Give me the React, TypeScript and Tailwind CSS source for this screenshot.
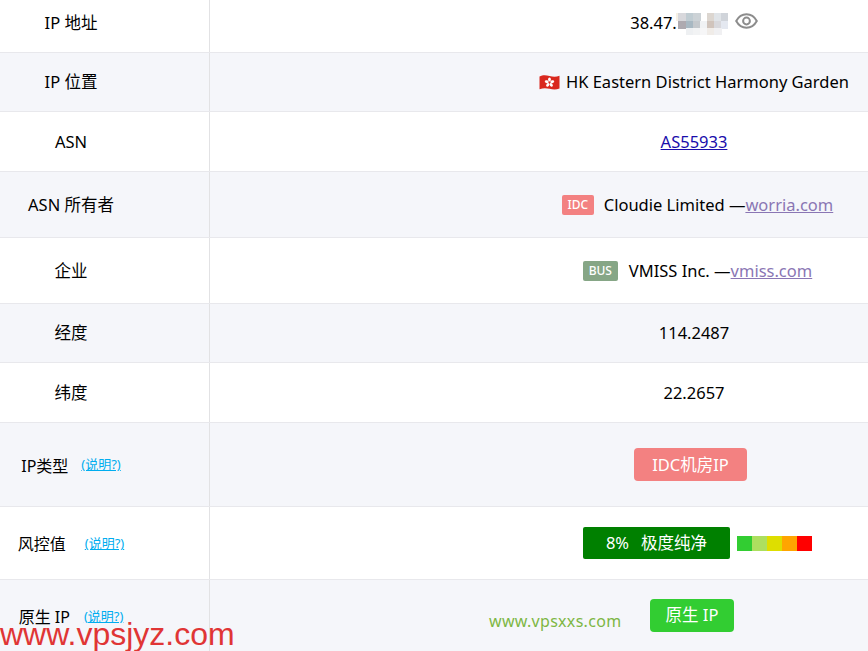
const font = "font-['Noto_Sans','Noto_Sans_CJK_SC',sans-serif]"

function Mosaic() {
  const cells: [number, number, string][] = [
    [0, 13, "#f6f0e4"],
    [2, 13, "#d8d8dc"], [10, 13, "#c0ccd2"], [17, 13, "#ccd2d6"], [31, 13, "#dcd6d0"], [38, 13, "#e0e4e8"], [45, 13, "#d0d4da"],
    [2, 21, "#aeaab0"], [10, 21, "#a8b8c2"], [17, 21, "#c4c8cc"], [24, 21, "#f0f2f4"], [31, 21, "#d0c4bc"], [38, 21, "#d8d8dc"], [45, 21, "#e4e8f0"],
    [10, 28, "#eef0f2"], [17, 28, "#f2f3f4"], [24, 28, "#f6f6f7"], [31, 28, "#f0ece8"], [38, 28, "#f0f0f2"],
  ]
  return (
    <svg width="52" height="22" viewBox="0 13 52 22" className="shrink-0 -ml-[1px] mt-[2px]">
      {cells.map(([x, y, c], i) => (
        <rect key={i} x={x} y={y} width={x === 0 ? 2 : 8} height="8" fill={c} />
      ))}
    </svg>
  )
}

function Eye() {
  return (
    <svg width="23" height="16" viewBox="0 0 23 16" fill="none" stroke="#8c8c8c" className="ml-[7px] mb-[4px] shrink-0">
      <path d="M1.2 8C3.5 3.8 7 1.3 11.5 1.3S19.5 3.8 21.8 8C19.5 12.2 16 14.7 11.5 14.7S3.5 12.2 1.2 8Z" strokeWidth="2" />
      <circle cx="11.5" cy="8" r="3.4" strokeWidth="2" />
    </svg>
  )
}

function Flag() {
  return (
    <svg width="21" height="17" viewBox="0 0 21 17" className="shrink-0">
      <path d="M0.5 2.5C4 0.8 7 1.2 10.5 2S17 3 20.5 1.8V14.5C17 15.8 14 15.5 10.5 14.8S4 14 0.5 15.3Z" fill="#d9281e" />
      <g fill="#ffffff">
        <ellipse cx="10.5" cy="5.6" rx="1.4" ry="2" />
        <ellipse cx="7.7" cy="7.7" rx="1.4" ry="2" transform="rotate(-72 7.7 7.7)" />
        <ellipse cx="13.3" cy="7.7" rx="1.4" ry="2" transform="rotate(72 13.3 7.7)" />
        <ellipse cx="8.8" cy="10.9" rx="1.4" ry="2" transform="rotate(-144 8.8 10.9)" />
        <ellipse cx="12.2" cy="10.9" rx="1.4" ry="2" transform="rotate(144 12.2 10.9)" />
      </g>
    </svg>
  )
}

function Help() {
  return <a className="text-[13px] text-[#00adef] underline whitespace-nowrap">(说明?)</a>
}

function Row(props: { h: string; odd?: boolean; label: React.ReactNode; children: React.ReactNode; shift?: string; down?: boolean }) {
  return (
    <div className={`flex border-b border-[#e8e8ec] ${props.h} ${props.odd ? "bg-[#f5f6fa]" : "bg-white"}`}>
      <div className={`w-[210px] shrink-0 border-r border-[#e2e2e4] pr-[67px] flex items-center justify-center whitespace-nowrap ${props.down ? "pt-[2px]" : ""}`}>
        {props.label}
      </div>
      <div className={`flex-1 min-w-0 flex items-center justify-center whitespace-nowrap ${props.down ? "pt-[2px]" : ""} ${props.shift ?? "pl-[310px]"}`}>
        {props.children}
      </div>
    </div>
  )
}

export default function App() {
  return (
    <div className={`relative h-[651px] w-[868px] overflow-hidden bg-white text-[16.5px] text-black ${font}`}>
      <Row h="h-[53px]" label={<span className="pb-[6px]">IP 地址</span>}>
        <div className="flex items-center pb-[6px]">
          <span>38.47.</span>
          <Mosaic />
          <Eye />
        </div>
      </Row>
      <Row h="h-[59px]" odd label="IP 位置">
        <div className="flex items-center gap-[6px]">
          <Flag />
          <span>HK Eastern District Harmony Garden</span>
        </div>
      </Row>
      <Row h="h-[60px]" down label="ASN">
        <a className="text-[#1a0dab] underline">AS55933</a>
      </Row>
      <Row h="h-[66px]" odd down label="ASN 所有者" shift="pl-[317px]">
        <div className="flex items-center">
          <span className="mb-[2px] mr-[10px] flex h-[20px] w-[32px] items-center justify-center rounded-[2px] bg-[#f38181] text-[12px] font-medium text-white">IDC</span>
          <span>Cloudie Limited —</span>
          <a className="text-[#8a76b4] underline">worria.com</a>
        </div>
      </Row>
      <Row h="h-[66px]" down label="企业" shift="pl-[317px]">
        <div className="flex items-center">
          <span className="mb-[2px] mr-[11px] flex h-[20px] w-[35px] items-center justify-center rounded-[2px] bg-[#86a686] text-[12px] font-medium text-white">BUS</span>
          <span>VMISS Inc. —</span>
          <a className="text-[#8a76b4] underline">vmiss.com</a>
        </div>
      </Row>
      <Row h="h-[59px]" odd label="经度">114.2487</Row>
      <Row h="h-[60px]" down label="纬度">22.2657</Row>
      <Row
        h="h-[84px]"
        odd
        label={
          <div className="flex items-center gap-[13px]">
            <span className="pt-[2px] text-[16px]">IP类型</span>
            <Help />
          </div>
        }
        shift="pl-[303px]"
      >
        <span className="flex h-[33px] w-[113px] items-center justify-center rounded-[4px] bg-[#f38181] pt-[1px] text-white">IDC机房IP</span>
      </Row>
      <Row
        h="h-[73px]"
        label={
          <div className="flex items-center gap-[19px] pt-[2px]">
            <span className="text-[16px]">风控值</span>
            <Help />
          </div>
        }
        shift="pl-[317px]"
      >
        <div className="flex items-center gap-[7px]">
          <span className="flex h-[32px] w-[147px] items-center justify-center gap-[12px] rounded-[2px] bg-[#008000] text-white">
            <span>8%</span>
            <span>极度纯净</span>
          </span>
          <div className="flex h-[15px]">
            <span className="w-[15px] bg-[#32cd32]" />
            <span className="w-[15px] bg-[#addf5f]" />
            <span className="w-[15px] bg-[#dede00]" />
            <span className="w-[15px] bg-[#ffa500]" />
            <span className="w-[15px] bg-[#ff0000]" />
          </div>
        </div>
      </Row>
      <Row
        h="h-[74px]"
        odd
        label={
          <div className="flex items-center gap-[14px]">
            <span className="text-[16px]">原生 IP</span>
            <Help />
          </div>
        }
        shift="pl-[306px]"
      >
        <span className="mb-[3px] flex h-[33px] w-[84px] items-center justify-center rounded-[4px] bg-[#32cd32] pt-[1px] text-white">原生 IP</span>
      </Row>

      <span className="absolute left-[489px] top-[609px] text-[16px] tracking-[0.3px] text-[#7db644]">www.vpsxxs.com</span>
      <span className="absolute left-0 top-[617px] font-['Liberation_Sans',sans-serif] text-[32px] leading-[34px] text-[#e03535]">www.vpsjyz.com</span>
    </div>
  )
}
